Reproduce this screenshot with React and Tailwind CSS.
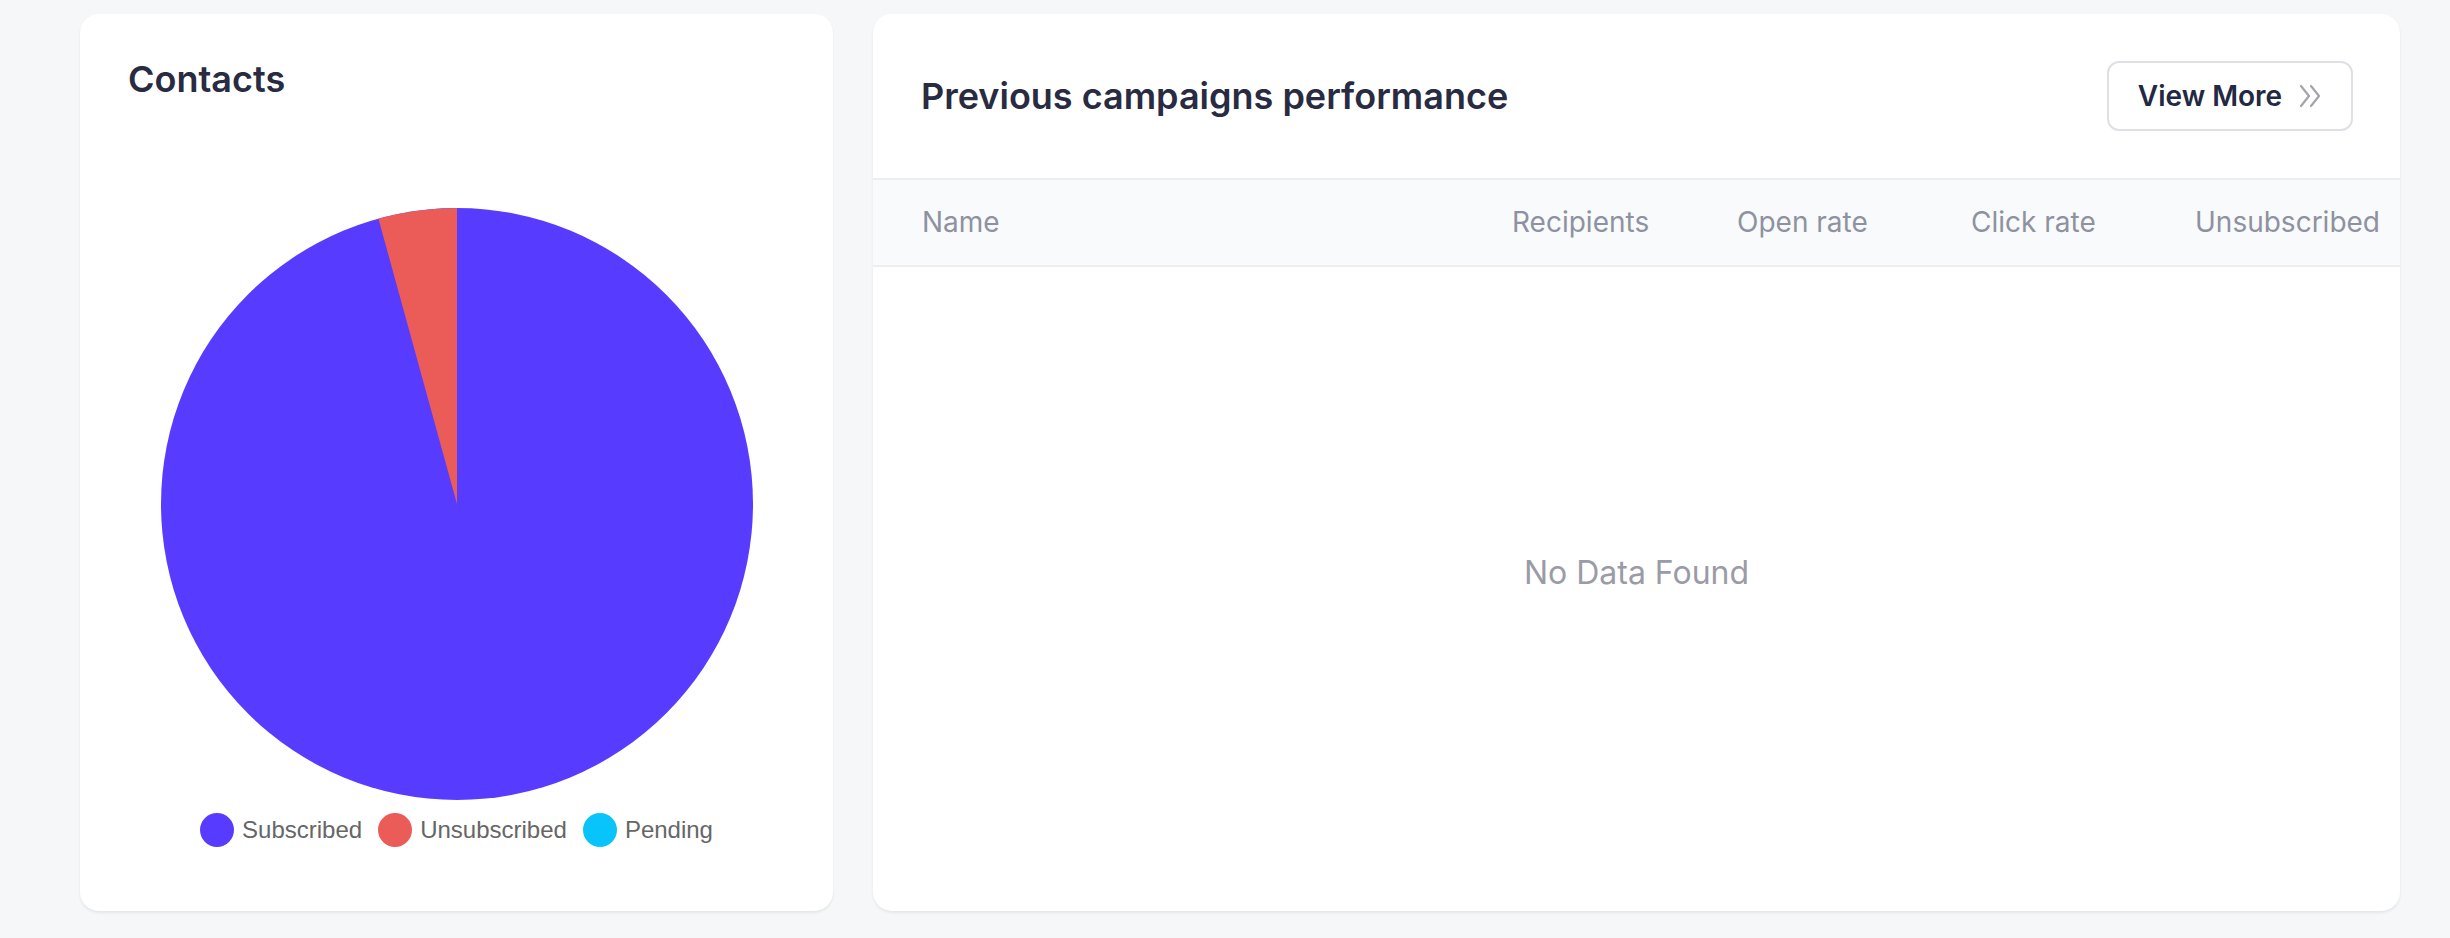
import React from "react";

const legend = [
  { label: "Subscribed", color: "bg-[#573cff]" },
  { label: "Unsubscribed", color: "bg-[#eb5b57]" },
  { label: "Pending", color: "bg-[#08c4fb]" },
];

const columns = ["Name", "Recipients", "Open rate", "Click rate", "Unsubscribed"];

function ContactsCard() {
  return (
    <div className="w-[753px] h-[897px] shrink-0 bg-white rounded-[19px] shadow-[0_2px_3px_rgba(0,0,0,0.07)] flex flex-col">
      <h2 className="pl-[48px] pt-[43px] font-['Inter',sans-serif] font-semibold text-[36px] leading-[45px] text-[#282b41]">
        Contacts
      </h2>

      {/* pie */}
      <div className="flex justify-center mt-[106px]">
        <svg width="592" height="592" viewBox="0 0 592 592">
          <circle cx="296" cy="296" r="296" fill="#573cff" />
          <path d="M296 296 L296 0 A296 296 0 0 0 217.4 10.6 Z" fill="#eb5b57" />
        </svg>
      </div>

      {/* legend */}
      <div className="flex justify-center items-center mt-[13px] font-['Liberation_Sans',Arial,sans-serif] text-[24px] leading-[34px] text-[#666666]">
        {legend.map((item, i) => (
          <div key={item.label} className={`flex items-center gap-[8px] ${i > 0 ? "ml-[16px]" : ""}`}>
            <span className={`w-[34px] h-[34px] rounded-full ${item.color}`} />
            <span>{item.label}</span>
          </div>
        ))}
      </div>
    </div>
  );
}

function CampaignsCard() {
  return (
    <div className="flex-1 h-[897px] bg-white rounded-[19px] shadow-[0_2px_3px_rgba(0,0,0,0.07)] flex flex-col font-['Inter',sans-serif] overflow-hidden">
      <div className="h-[164px] flex items-center justify-between pl-[48px] pr-[47px]">
        <h2 className="font-semibold text-[36px] leading-[45px] text-[#282b41]">
          Previous campaigns performance
        </h2>
        <button className="w-[246px] h-[70px] flex items-center justify-center gap-[16px] border-2 border-[#dfe0e6] rounded-[12px] bg-white">
          <span className="font-semibold text-[28px] leading-[34px] text-[#232843]">View More</span>
          <svg width="24" height="24" viewBox="0 0 24 24" fill="none" stroke="#a3a4ac" strokeWidth="2.2" strokeLinecap="round" strokeLinejoin="round">
            <path d="M3 2 L11 12 L3 22" />
            <path d="M13 2 L21 12 L13 22" />
          </svg>
        </button>
      </div>

      {/* table head */}
      <div className="h-[89px] grid grid-cols-[590px_225px_234px_224px_1fr] items-center pl-[49px] pb-[2px] bg-[#f9fafb] border-y-2 border-[#eceef1] text-[28px] leading-[34px] text-[#8e92a0]">
        {columns.map((c) => (
          <span key={c}>{c}</span>
        ))}
      </div>

      <div className="flex-1 flex justify-center pt-[287px]">
        <span className="text-[32px] leading-[38px] text-[#9a9ba6]">No Data Found</span>
      </div>
    </div>
  );
}

export default function App() {
  return (
    <div className="w-full h-[938px] bg-[#f6f7f9] flex gap-[40px] pt-[14px] pl-[80px] pr-[50px]">
      <ContactsCard />
      <CampaignsCard />
    </div>
  );
}
